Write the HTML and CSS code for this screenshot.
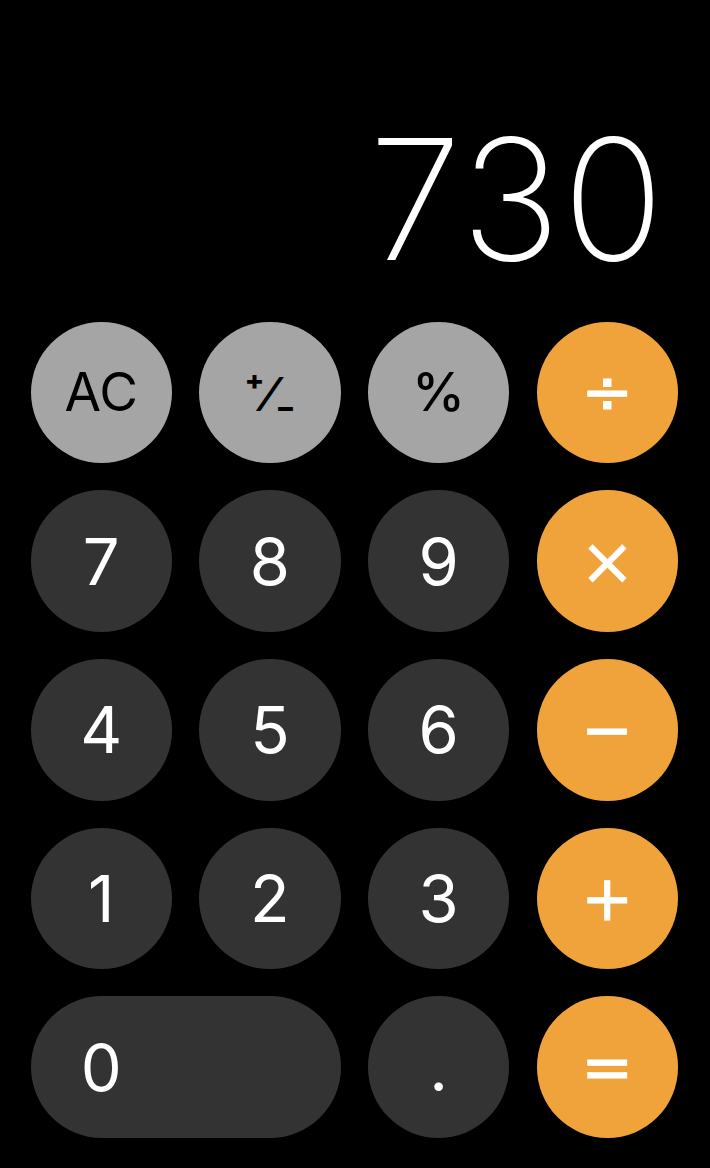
FILE: index.html
```html
<!DOCTYPE html>
<html lang="en">
<head>
<meta charset="utf-8">
<title>Calculator</title>
<link rel="stylesheet" href="styles.css">
</head>
<body>
<main class="calc">
  <div class="display"><span class="value">730</span></div>
  <div class="keypad">
    <button class="key fn"><span class="lbl-ac">AC</span></button>
    <button class="key fn"><span class="lbl-sign">⁺⁄₋</span></button>
    <button class="key fn"><span class="lbl-pct">%</span></button>
    <button class="key op"><span class="lbl-op">÷</span></button>

    <button class="key num">7</button>
    <button class="key num">8</button>
    <button class="key num">9</button>
    <button class="key op"><span class="lbl-op lbl-x">×</span></button>

    <button class="key num">4</button>
    <button class="key num">5</button>
    <button class="key num">6</button>
    <button class="key op"><span class="lbl-op">−</span></button>

    <button class="key num">1</button>
    <button class="key num">2</button>
    <button class="key num">3</button>
    <button class="key op"><span class="lbl-op">+</span></button>

    <button class="key num zero"><span class="zero-lbl">0</span></button>
    <button class="key num">.</button>
    <button class="key op"><span class="lbl-op">=</span></button>
  </div>
</main>
</body>
</html>
```

FILE: styles.css
```css
html, body {
  margin: 0;
  padding: 0;
  background: #000;
}

body {
  width: 710px;
  height: 1168px;
  overflow: hidden;
  font-family: Inter, "Liberation Sans", sans-serif;
}

.calc {
  display: flex;
  flex-direction: column;
}

.display {
  height: 294.5px;
  display: flex;
  justify-content: flex-end;
  align-items: flex-start;
  padding-right: 44px;
  box-sizing: border-box;
}

.value {
  display: block;
  margin-top: 115px;
  font-size: 168px;
  line-height: 1;
  font-weight: 200;
  color: #fff;
  letter-spacing: 2px;
}

.keypad {
  margin-top: 27.2px;
  padding-left: 30.5px;
  display: grid;
  grid-template-columns: repeat(4, 141.5px);
  grid-auto-rows: 141.5px;
  gap: 27.2px;
}

.key {
  border: none;
  margin: 0;
  padding: 0;
  border-radius: 70.75px;
  display: flex;
  align-items: center;
  justify-content: center;
  font-family: Inter, "Liberation Sans", sans-serif;
  font-size: 65px;
  font-weight: 400;
  color: #fff;
  line-height: normal;
}

.num {
  background: #333333;
}

.fn {
  background: #a5a5a5;
  color: #000;
}

.op {
  background: #f1a33b;
}

.zero {
  grid-column: span 2;
  justify-content: flex-start;
}

.zero-lbl {
  width: 141.5px;
  text-align: center;
}

.lbl-ac {
  font-size: 53px;
  font-weight: 400;
}

.lbl-pct {
  font-size: 53px;
  font-weight: 500;
}

.lbl-sign {
  font-size: 47px;
  font-weight: 600;
  position: relative;
  top: 1px;
}

.lbl-op {
  font-family: "DejaVu Sans", sans-serif;
  font-size: 62px;
  font-weight: 400;
  color: #fff;
  -webkit-text-stroke: 1px #fff;
}

.lbl-x {
  font-size: 66px;
  -webkit-text-stroke: 0.6px #fff;
}
```
